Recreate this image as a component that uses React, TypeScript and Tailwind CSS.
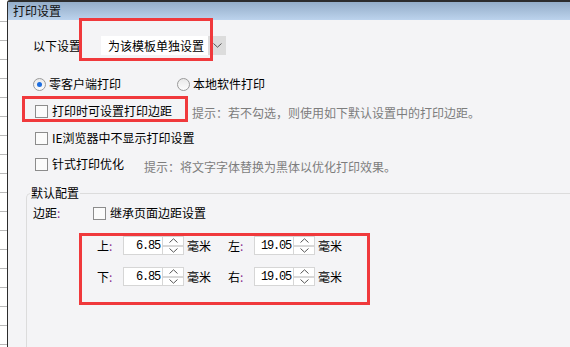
import React from 'react'

const font = { fontFamily: '"Noto Sans CJK SC", "Noto Sans", sans-serif' }

function Checkbox() {
  return <span className="inline-block w-[13px] h-[13px] border border-[#8c8c8c] bg-[#fbfbfb] shrink-0" />
}

function Radio({ checked }: { checked?: boolean }) {
  return (
    <span className="inline-flex items-center justify-center w-[13px] h-[13px] rounded-full border border-[#9a9a9a] bg-gradient-to-b from-[#e9e9e9] to-[#fdfdfd] shrink-0">
      {checked && <span className="w-[5px] h-[5px] rounded-full bg-[#1d6ee0]" />}
    </span>
  )
}

function Chevron({ up }: { up?: boolean }) {
  return (
    <svg width="9" height="5" viewBox="0 0 9 5" className="block">
      <path d={up ? 'M0.5 4.5 L4.5 0.8 L8.5 4.5' : 'M0.5 0.5 L4.5 4.2 L8.5 0.5'} fill="none" stroke="#555" strokeWidth="1" />
    </svg>
  )
}

function MarginField({ label, value }: { label: string; value: string }) {
  return (
    <div className="flex items-center h-[19px]">
      <span className="w-[26px] text-[12px] leading-none text-black">
        {label}<span className="text-[#8a2f8f]">:</span>
      </span>
      <div className="w-[40px] h-[19px] bg-white border border-[#d6d6d6] flex items-center justify-end pr-[2px]">
        <span className="text-[12px] tracking-[-1.2px] text-black" style={{ fontFamily: '"Liberation Mono", monospace' }}>{value}</span>
      </div>
      <div className="w-[21px] h-[19px] flex flex-col border border-l-0 border-[#d6d6d6] bg-white">
        <div className="flex-1 flex items-center justify-center"><Chevron up /></div>
        <div className="h-[2px] bg-[#d8d8d8]" />
        <div className="flex-1 flex items-center justify-center"><Chevron /></div>
      </div>
      <span className="ml-[3px] text-[12px] text-black">毫米</span>
    </div>
  )
}

export default function App() {
  return (
    <div className="relative w-[570px] h-[347px] overflow-hidden flex bg-white" style={font}>
      {/* spreadsheet behind the dialog */}
      <div className="w-[7px] flex flex-col bg-white pt-[3px]">
        {Array.from({ length: 18 }).map((_, i) => (
          <div key={i} className="h-[19px] shrink-0 border-b border-[#b9b9b9]" />
        ))}
      </div>

      <div className="flex-1 flex flex-col border-l border-t-2 border-[#2c2c2c] rounded-tl-[3px] bg-[#f4f4f6]">
        <div className="h-[23px] flex items-center pl-[5px] bg-gradient-to-b from-[#94adc8] to-[#bcd3ed] text-[12px] text-[#111]">
          打印设置
        </div>

        <div className="flex flex-col text-[12px] text-black">
          {/* template scope */}
          <div className="mt-[16px] pl-[25px] flex items-center h-[19px]">
            <span className="w-[68px]">以下设置</span>
            <div className="w-[107px] h-[19px] bg-white flex items-center pl-[7px]">为该模板单独设置</div>
            <div className="w-[18px] h-[19px] bg-[#dcdcdc] flex items-center justify-center">
              <Chevron />
            </div>
          </div>

          {/* print mode */}
          <div className="mt-[20px] pl-[25px] flex items-center h-[18px]">
            <div className="w-[144px] flex items-center gap-[3px]">
              <Radio checked />
              <span>零客户端打印</span>
            </div>
            <div className="flex items-center gap-[3px]">
              <Radio />
              <span>本地软件打印</span>
            </div>
          </div>

          <div className="mt-[9px] pl-[27px] flex items-center h-[18px]">
            <div className="w-[157px] flex items-center gap-[4px]">
              <Checkbox />
              <span>打印时可设置打印边距</span>
            </div>
            <span className="text-[#7d7d7d] mt-[3px]">提示：若不勾选，则使用如下默认设置中的打印边距。</span>
          </div>

          <div className="mt-[9px] pl-[27px] flex items-center h-[18px] gap-[4px]">
            <Checkbox />
            <span>IE浏览器中不显示打印设置</span>
          </div>

          <div className="mt-[8px] pl-[27px] flex items-center h-[18px]">
            <div className="w-[109px] flex items-center gap-[4px]">
              <Checkbox />
              <span>针式打印优化</span>
            </div>
            <span className="text-[#7d7d7d] mt-[5px]">提示：将文字字体替换为黑体以优化打印效果。</span>
          </div>

          {/* default config group */}
          <fieldset className="mt-[12px] ml-[18px] pl-[3px] border-t border-l border-[#dcdcdc] rounded-tl-[5px] h-[170px]">
            <legend className="px-[1px] text-[12px] leading-[16px]">默认配置</legend>
            <div className="mt-[3px] flex items-center h-[18px]">
              <span className="ml-[3px] w-[60px]">边距<span className="text-[#8a2f8f]">:</span></span>
              <div className="flex items-center gap-[4px]">
                <Checkbox />
                <span>继承页面边距设置</span>
              </div>
            </div>

            <div className="mt-[14px] ml-[67px] flex flex-col gap-[12px]">
              <div className="flex items-center gap-[17px]">
                <MarginField label="上" value="6.85" />
                <MarginField label="左" value="19.05" />
              </div>
              <div className="flex items-center gap-[17px]">
                <MarginField label="下" value="6.85" />
                <MarginField label="右" value="19.05" />
              </div>
            </div>
          </fieldset>
        </div>
      </div>

      {/* red annotation boxes */}
      <div className="absolute left-[79px] top-[18px] w-[134px] h-[43px] border-[3px] border-[#f0393c]" />
      <div className="absolute left-[22px] top-[96px] w-[166px] h-[26px] border-[3px] border-[#f0393c]" />
      <div className="absolute left-[79px] top-[233px] w-[291px] h-[72px] border-[3px] border-[#f0393c]" />
    </div>
  )
}
